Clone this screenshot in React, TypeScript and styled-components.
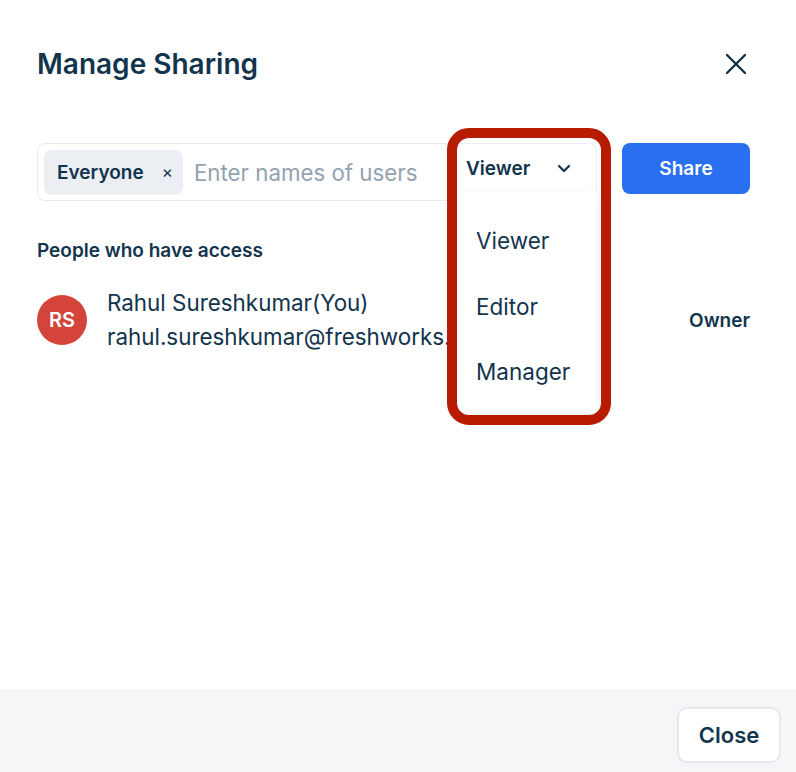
import React from 'react'
import styled, { createGlobalStyle } from 'styled-components'

const GlobalStyle = createGlobalStyle`
  html, body {
    margin: 0;
    padding: 0;
    background: #ffffff;
  }
  body {
    font-family: Inter, "Noto Sans", "Liberation Sans", sans-serif;
    color: #12344d;
  }
`

const Modal = styled.div`
  width: 796px;
  height: 772px;
  display: flex;
  flex-direction: column;
  background: #ffffff;
  overflow: hidden;
`

const Body = styled.div`
  flex: 1;
  padding: 46px 46px 0 37px;
`

const Header = styled.div`
  display: flex;
  align-items: center;
  justify-content: space-between;
  height: 36px;
`

const Title = styled.h1`
  margin: 0;
  font-size: 28px;
  font-weight: 600;
  color: #12344d;
`

const IconButton = styled.button`
  border: none;
  background: none;
  padding: 0;
  width: 28px;
  height: 28px;
  display: flex;
  align-items: center;
  justify-content: center;
  color: #12344d;
  cursor: pointer;
`

const ShareRow = styled.div`
  display: flex;
  align-items: flex-start;
  gap: 25px;
  margin-top: 61px;
`

const InputBox = styled.div`
  position: relative;
  width: 560px;
  height: 58px;
  box-sizing: border-box;
  border: 1px solid #e6e9ee;
  border-radius: 8px;
  display: flex;
  align-items: center;
  padding-left: 6px;
`

const Chip = styled.div`
  display: flex;
  align-items: center;
  height: 45px;
  padding: 0 10px 0 13px;
  background: #ebeef3;
  border-radius: 8px;
  font-size: 19px;
  font-weight: 600;
  gap: 18px;
`

const ChipRemove = styled.span`
  font-size: 17px;
  font-weight: 400;
  color: #12344d;
`

const Placeholder = styled.span`
  margin-left: 11px;
  font-size: 22.3px;
  color: #92a2b1;
  white-space: nowrap;
`

const SelectWrap = styled.div`
  position: absolute;
  top: -1px;
  right: -1px;
  width: 141px;
`

const Trigger = styled.div`
  height: 49px;
  box-sizing: border-box;
  border: 1px solid #eceff3;
  border-bottom: none;
  border-radius: 8px 8px 0 0;
  display: flex;
  align-items: center;
  justify-content: space-between;
  padding: 0 25px 0 9px;
  font-size: 19px;
  font-weight: 600;
  background: #ffffff;
`

const Menu = styled.div`
  position: relative;
  z-index: 2;
  height: 222px;
  box-sizing: border-box;
  background: #ffffff;
  border-radius: 0 0 8px 8px;
  box-shadow: 0 4px 10px rgba(18, 52, 77, 0.08);
  display: flex;
  flex-direction: column;
  gap: 35.5px;
  padding-top: 34px;
`

const MenuItem = styled.div`
  padding-left: 20px;
  font-size: 22.5px;
  line-height: 30px;
  color: #12344d;
`

const Highlight = styled.div`
  position: absolute;
  z-index: 3;
  top: -15px;
  left: -9px;
  width: 164px;
  height: 297px;
  box-sizing: border-box;
  border: 10px solid #b71c00;
  border-radius: 22px;
  pointer-events: none;
`

const ShareButton = styled.button`
  width: 128px;
  height: 51px;
  border: none;
  border-radius: 8px;
  background: #2a6ff0;
  color: #ffffff;
  font-family: inherit;
  font-size: 19px;
  font-weight: 600;
`

const SectionTitle = styled.div`
  margin-top: 38px;
  font-size: 19px;
  font-weight: 600;
`

const PersonRow = styled.div`
  display: flex;
  align-items: center;
  margin-top: 24px;
`

const Avatar = styled.div<{ $bg: string }>`
  width: 50px;
  height: 50px;
  border-radius: 50%;
  background: ${p => p.$bg};
  color: #ffffff;
  display: flex;
  align-items: center;
  justify-content: center;
  font-size: 20px;
  font-weight: 600;
  flex-shrink: 0;
`

const PersonInfo = styled.div`
  margin-left: 20px;
  flex: 1;
  font-size: 22.4px;
  line-height: 34px;
  white-space: nowrap;
`

const Role = styled.div`
  font-size: 19px;
  font-weight: 600;
`

const Footer = styled.div`
  height: 83px;
  box-sizing: border-box;
  background: #f5f6f8;
  display: flex;
  align-items: flex-start;
  justify-content: flex-end;
  padding: 18px 15px 0 0;
`

const CloseButton = styled.button`
  width: 104px;
  height: 56px;
  border: 2px solid #e6e9ee;
  border-radius: 10px;
  background: #ffffff;
  color: #12344d;
  font-family: inherit;
  font-size: 22px;
  font-weight: 600;
`

const roles = ['Viewer', 'Editor', 'Manager']

export default function App() {
  return (
    <>
      <GlobalStyle />
      <Modal>
        <Body>
          <Header>
            <Title>Manage Sharing</Title>
            <IconButton aria-label="Close">
              <svg width="22" height="22" viewBox="0 0 22 22" fill="none" stroke="currentColor" strokeWidth="2.4" strokeLinecap="round">
                <path d="M2 2 L20 20 M20 2 L2 20" />
              </svg>
            </IconButton>
          </Header>

          <ShareRow>
            <InputBox>
              <Chip>
                Everyone
                <ChipRemove>×</ChipRemove>
              </Chip>
              <Placeholder>Enter names of users</Placeholder>
              <SelectWrap>
                <Trigger>
                  Viewer
                  <svg width="14" height="9" viewBox="0 0 14 9" fill="none" stroke="currentColor" strokeWidth="2.2" strokeLinecap="round" strokeLinejoin="round">
                    <path d="M2 2 L7 7 L12 2" />
                  </svg>
                </Trigger>
                <Menu>
                  {roles.map(r => (
                    <MenuItem key={r}>{r}</MenuItem>
                  ))}
                </Menu>
                <Highlight />
              </SelectWrap>
            </InputBox>
            <ShareButton>Share</ShareButton>
          </ShareRow>

          <SectionTitle>People who have access</SectionTitle>
          <PersonRow>
            <Avatar $bg="#d4443a">RS</Avatar>
            <PersonInfo>
              <div>Rahul Sureshkumar(You)</div>
              <div>rahul.sureshkumar@freshworks.com</div>
            </PersonInfo>
            <Role>Owner</Role>
          </PersonRow>
        </Body>
        <Footer>
          <CloseButton>Close</CloseButton>
        </Footer>
      </Modal>
    </>
  )
}
